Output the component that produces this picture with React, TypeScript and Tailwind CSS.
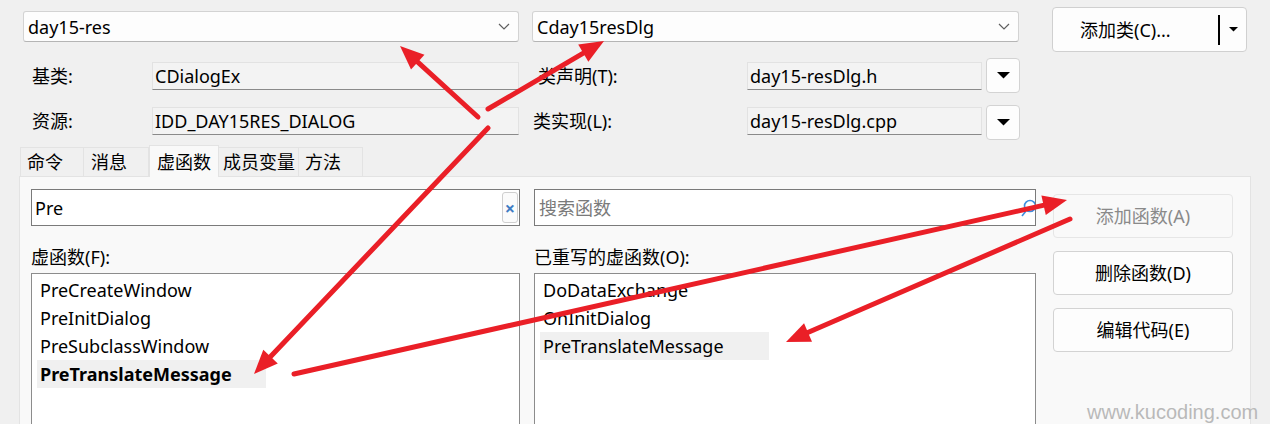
import React from "react";

type Pt = [number, number];

// red annotation arrows drawn over the dialog
const arrows: [Pt, Pt][] = [
  [[478, 117], [400, 46]],
  [[488, 109], [604, 41]],
  [[488, 128], [254, 374]],
  [[294, 374], [1067, 200]],
  [[1070, 219], [786, 342]],
];

function Arrow({ from, to }: { from: Pt; to: Pt }) {
  const dx = to[0] - from[0];
  const dy = to[1] - from[1];
  const len = Math.hypot(dx, dy);
  const ux = dx / len;
  const uy = dy / len;
  const headLen = 24;
  const headHalf = 10;
  const bx = to[0] - ux * headLen;
  const by = to[1] - uy * headLen;
  const p1 = `${bx - uy * headHalf},${by + ux * headHalf}`;
  const p2 = `${bx + uy * headHalf},${by - ux * headHalf}`;
  return (
    <g>
      <line
        x1={from[0]}
        y1={from[1]}
        x2={bx + ux * 4}
        y2={by + uy * 4}
        stroke="#ea1f27"
        strokeWidth={5}
        strokeLinecap="round"
      />
      <polygon points={`${to[0]},${to[1]} ${p1} ${p2}`} fill="#ea1f27" />
    </g>
  );
}

function Chevron() {
  return (
    <svg width="12" height="7" viewBox="0 0 12 7" className="shrink-0">
      <path d="M1 1l5 5 5-5" fill="none" stroke="#5f5f5f" strokeWidth="1.2" />
    </svg>
  );
}

function Caret({ w = 12 }: { w?: number }) {
  return (
    <svg width={w} height={w / 2} viewBox="0 0 12 6">
      <path d="M0 0h12L6 6z" fill="#000" />
    </svg>
  );
}

function Combo({ text, className }: { text: string; className: string }) {
  return (
    <div
      className={`flex h-[31px] items-center justify-between rounded-[3px] border border-[#d3d3d3] border-b-[#b5b5b5] bg-[#fdfdfd] pl-[4px] pr-[8px] ${className}`}
    >
      <span>{text}</span>
      <Chevron />
    </div>
  );
}

function ReadField({ text, className }: { text: string; className: string }) {
  return (
    <div
      className={`flex h-[28px] items-center border border-[#e2e2e2] border-b-[#8a8a8a] bg-[#f3f3f3] pl-[2px] ${className}`}
    >
      {text}
    </div>
  );
}

function SmallDrop({ className }: { className: string }) {
  return (
    <div
      className={`flex h-[35px] w-[34px] items-center justify-center rounded-[4px] border border-[#d3d3d3] bg-[#fdfdfd] ${className}`}
    >
      <Caret w={13} />
    </div>
  );
}

const tabs = [
  { label: "命令", w: "w-[64px]", pl: "pl-[6px]" },
  { label: "消息", w: "w-[66px]", pl: "pl-[7px]" },
  { label: "虚函数", w: "w-[70px]", pl: "pl-[7px]", active: true },
  { label: "成员变量", w: "w-[81px]", pl: "pl-[4px]" },
  { label: "方法", w: "w-[65px]", pl: "pl-[6px]" },
];

function ListBox({
  items,
  selected,
  boldSelected,
}: {
  items: string[];
  selected: number;
  boldSelected?: boolean;
}) {
  return (
    <div className="h-[200px] border border-[#8c8c8c] bg-white pl-[5px] pt-[2px]">
      {items.map((it, i) => (
        <div
          key={it}
          className={`flex h-[28px] w-[229px] items-center pl-[3px] ${
            i === selected ? "bg-[#f0f0f0]" : ""
          } ${i === selected && boldSelected ? "font-bold" : ""}`}
        >
          {it}
        </div>
      ))}
    </div>
  );
}

function SideButton({ text, disabled }: { text: string; disabled?: boolean }) {
  return (
    <div
      className={`flex h-[44px] w-[180px] items-center justify-center rounded-[4px] border ${
        disabled
          ? "border-[#e6e6e6] bg-[#f9f9f9] text-[#8a8a8a]"
          : "border-[#d3d3d3] bg-[#fdfdfd] text-black"
      }`}
    >
      {text}
    </div>
  );
}

export default function App() {
  return (
    <div className="relative flex h-[424px] w-[1270px] flex-col overflow-hidden bg-[#f0f0f0] font-['Noto_Sans','Noto_Sans_CJK_SC',sans-serif] text-[18px] leading-none text-black">
      {/* top combos */}
      <div className="flex items-start pl-[23px]">
        <Combo text="day15-res" className="mt-[11px] w-[496px]" />
        <Combo text="Cday15resDlg" className="ml-[13px] mt-[11px] w-[487px]" />
        <div className="ml-[33px] mt-[7px] flex h-[45px] w-[195px] items-center rounded-[4px] border border-[#d0d0d0] bg-[#fdfdfd]">
          <span className="ml-[27px] w-[138px]">添加类(C)...</span>
          <div className="h-[30px] w-[2px] bg-black" />
          <div className="ml-[9px]">
            <Caret w={9} />
          </div>
        </div>
      </div>

      {/* base class row */}
      <div className="mt-[10px] flex h-[28px] items-center">
        <span className="w-[152px] pl-[32px]">基类:</span>
        <ReadField text="CDialogEx" className="w-[367px]" />
        <span className="ml-[19px] w-[209px]">类声明(T):</span>
        <ReadField text="day15-resDlg.h" className="w-[235px]" />
        <SmallDrop className="ml-[4px] -mt-[4px] self-start" />
      </div>

      {/* resource row */}
      <div className="mt-[17px] flex h-[28px] items-center">
        <span className="w-[152px] pl-[32px]">资源:</span>
        <ReadField text="IDD_DAY15RES_DIALOG" className="w-[367px]" />
        <span className="ml-[14px] w-[214px]">类实现(L):</span>
        <ReadField text="day15-resDlg.cpp" className="w-[235px]" />
        <SmallDrop className="ml-[4px] -mt-[2px] self-start" />
      </div>

      {/* tabs */}
      <div className="relative z-10 -mb-px mt-[10px] flex h-[32px] items-end pl-[20px]">
        {tabs.map((t) => (
          <div
            key={t.label}
            className={`flex items-center border border-[#e3e3e3] ${t.w} ${t.pl} ${
              t.active
                ? "h-[32px] border-b-0 bg-[#f9f9f9]"
                : "-ml-px h-[30px] bg-[#f0f0f0] first:ml-0"
            }`}
          >
            {t.label}
          </div>
        ))}
      </div>

      {/* panel */}
      <div className="ml-[19px] flex w-[1232px] flex-1 border border-[#e3e3e3] bg-[#f9f9f9] pl-[11px] pt-[12px]">
        <div className="flex w-[489px] flex-col">
          <div className="flex h-[37px] items-center justify-between border border-[#7a7a7a] bg-white pl-[3px] pr-px">
            <span>Pre</span>
            <div className="flex h-[31px] w-[16px] items-center justify-center rounded-[3px] border border-[#cfcfcf] bg-[#fbfbfb] text-[18px] font-bold text-[#3f7cc4]">
              ×
            </div>
          </div>
          <div className="flex h-[47px] items-center pt-[15px]">虚函数(F):</div>
          <ListBox
            items={["PreCreateWindow", "PreInitDialog", "PreSubclassWindow", "PreTranslateMessage"]}
            selected={3}
            boldSelected
          />
        </div>

        <div className="ml-[14px] flex w-[502px] flex-col">
          <div className="flex h-[37px] items-center justify-between overflow-hidden border border-[#7a7a7a] bg-white pl-[4px]">
            <span className="text-[#7a7a7a]">搜索函数</span>
            <svg width="16" height="22" viewBox="0 0 16 22" className="-mr-[2px] mt-[4px]">
              <circle cx="9" cy="7" r="5.5" fill="none" stroke="#3d8ee0" strokeWidth="1.6" />
              <path d="M5 12l-4 5" stroke="#3d8ee0" strokeWidth="1.6" />
            </svg>
          </div>
          <div className="flex h-[47px] items-center pt-[15px]">已重写的虚函数(O):</div>
          <ListBox items={["DoDataExchange", "OnInitDialog", "PreTranslateMessage"]} selected={2} />
        </div>

        <div className="ml-[17px] flex flex-col gap-[13px] pt-[5px]">
          <SideButton text="添加函数(A)" disabled />
          <SideButton text="删除函数(D)" />
          <SideButton text="编辑代码(E)" />
        </div>
      </div>

      {/* watermark */}
      <div className="absolute left-[1087px] top-[402px] font-['Liberation_Sans',sans-serif] text-[20px] text-[#b9b9b9]">
        www.kucoding.com
      </div>

      <svg className="pointer-events-none absolute inset-0" width="1270" height="424">
        {arrows.map(([a, b], i) => (
          <Arrow key={i} from={a} to={b} />
        ))}
      </svg>
    </div>
  );
}
